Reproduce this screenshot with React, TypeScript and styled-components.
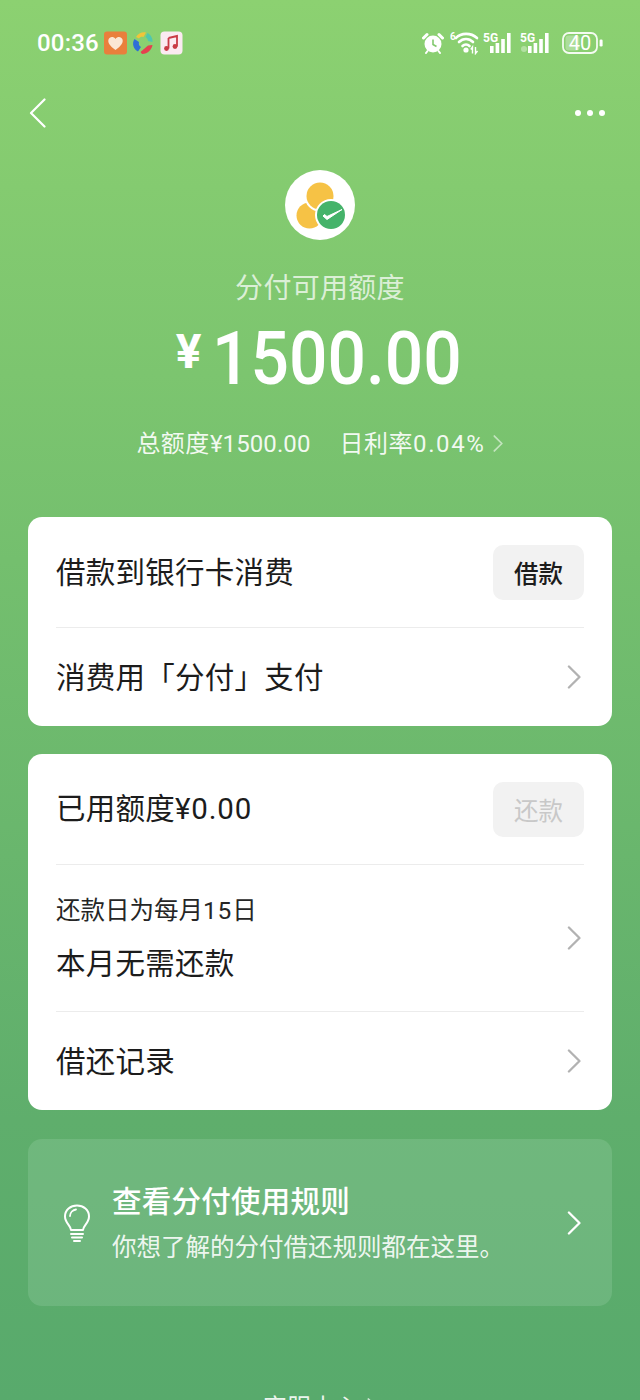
import React from 'react';
import styled, { createGlobalStyle } from 'styled-components';

const GlobalStyle = createGlobalStyle`
  html, body {
    margin: 0;
    padding: 0;
    height: 1400px;
    overflow: hidden;
  }
  body {
    font-family: "Noto Sans CJK SC", "Roboto", sans-serif;
  }
`;

const NUM_FONT = '"Roboto", "Noto Sans CJK SC", sans-serif';

const Page = styled.div`
  width: 640px;
  height: 1400px;
  overflow: hidden;
  box-sizing: border-box;
  padding-top: 28px;
  background: linear-gradient(180deg, #8cd171 0%, #74bf6e 40%, #5fae6c 80%, #58aa6c 100%);
`;

const StatusBar = styled.div`
  height: 30px;
  padding: 0 36px 0 37px;
  display: flex;
  align-items: center;
  justify-content: space-between;
`;

const StatusGroup = styled.div<{ $gap: number }>`
  display: flex;
  align-items: center;
  gap: ${(p) => p.$gap}px;
`;

const Clock = styled.span`
  font-family: ${NUM_FONT};
  font-size: 24px;
  font-weight: 500;
  color: #fff;
  letter-spacing: 0.2px;
  margin-right: 1px;
`;

const AppIcon = styled.svg`
  display: block;
  width: 23px;
  height: 24px;
`;

const StatusIcon = styled.svg`
  display: block;
`;

const Nav = styled.div`
  height: 50px;
  margin-top: 30px;
  padding: 0 30px;
  display: flex;
  align-items: center;
  justify-content: space-between;
`;

const Hero = styled.div`
  margin-top: 32px;
  display: flex;
  flex-direction: column;
  align-items: center;
`;

const LogoBadge = styled.div`
  width: 70px;
  height: 70px;
  border-radius: 50%;
  background: #fff;
  overflow: hidden;
`;

const HeroLabel = styled.div`
  margin-top: 26px;
  font-size: 28px;
  line-height: 40px;
  color: rgba(255, 255, 255, 0.72);
  letter-spacing: 0.3px;
`;

const Amount = styled.div`
  margin-top: 17px;
  height: 72px;
  display: flex;
  align-items: center;
  color: #fff;
  font-family: ${NUM_FONT};
  font-weight: 500;
`;

const Currency = styled.span`
  font-size: 48px;
  line-height: 48px;
  font-weight: 700;
  margin-right: 11px;
  margin-top: -14px;
`;

const AmountValue = styled.span`
  display: inline-block;
  width: 252px;
  font-size: 74px;
  line-height: 72px;
  white-space: nowrap;
  transform: scaleX(0.915);
  transform-origin: left center;
`;

const HeroMeta = styled.div`
  margin-top: 31px;
  height: 34px;
  display: flex;
  align-items: center;
  color: rgba(255, 255, 255, 0.92);
  font-size: 24px;
  line-height: 34px;
`;

const MetaItem = styled.span<{ $spaced?: boolean }>`
  margin-left: ${(p) => (p.$spaced ? 29 : 0)}px;
  letter-spacing: 0.5px;
`;

const MetaNum = styled.span<{ $spacing: number }>`
  font-family: ${NUM_FONT};
  letter-spacing: ${(p) => p.$spacing}px;
`;

const MetaArrow = styled.span`
  margin-left: 8px;
`;

const Stack = styled.div`
  margin-top: 57px;
  padding: 0 28px;
  display: flex;
  flex-direction: column;
  gap: 28px;
`;

const Card = styled.div`
  background: #fff;
  border-radius: 14px;
  padding: 0 28px;
`;

const Row = styled.div<{ $height: number; $divider?: boolean }>`
  height: ${(p) => p.$height}px;
  box-sizing: border-box;
  display: flex;
  align-items: center;
  justify-content: space-between;
  border-bottom: ${(p) => (p.$divider ? '1px solid #ececec' : 'none')};
`;

const RowTitle = styled.div`
  font-size: 29.5px;
  line-height: 40px;
  letter-spacing: 0.25px;
  color: #1c1c1c;
  margin-bottom: 4px;
`;

const RowNum = styled.span`
  font-family: ${NUM_FONT};
  letter-spacing: 0.8px;
`;

const RowColumn = styled.div`
  display: flex;
  flex-direction: column;
  gap: 13px;
`;

const RowCaption = styled.div`
  font-size: 24.5px;
  line-height: 34px;
  color: #262626;
`;

const RowArrow = styled.span`
  margin-right: 3px;
`;

const ActionButton = styled.div<{ $disabled?: boolean }>`
  width: 91px;
  height: 55px;
  border-radius: 10px;
  background: #f2f2f2;
  display: flex;
  align-items: center;
  justify-content: center;
  font-size: 24.5px;
  font-weight: ${(p) => (p.$disabled ? 400 : 500)};
  color: ${(p) => (p.$disabled ? '#c8c8c8' : '#1c1c1c')};
`;

const TipCard = styled.div`
  height: 167px;
  margin-top: 1px;
  box-sizing: border-box;
  border-radius: 14px;
  background: rgba(235, 255, 240, 0.13);
  padding: 0 28px 0 35px;
  display: flex;
  align-items: center;
`;

const TipBody = styled.div`
  flex: 1;
  margin-left: 21px;
  margin-top: -3px;
  display: flex;
  flex-direction: column;
  gap: 8px;
  color: #fff;
`;

const TipTitle = styled.div`
  font-size: 29.5px;
  line-height: 42px;
  letter-spacing: 0.25px;
  font-weight: 500;
`;

const TipText = styled.div`
  font-size: 24.5px;
  line-height: 36px;
  color: rgba(255, 255, 255, 0.9);
`;

const Footer = styled.div`
  margin-top: 83px;
  display: flex;
  align-items: center;
  justify-content: center;
  gap: 8px;
  font-size: 24px;
  line-height: 34px;
  color: rgba(255, 255, 255, 0.9);
`;

const Chevron = ({ color, size = 28, width = 2.4 }: { color: string; size?: number; width?: number }) => (
  <svg width={size * 0.6} height={size} viewBox="0 0 15 25" fill="none" style={{ display: 'block' }}>
    <path d="M2 1.5 L13 12.5 L2 23.5" stroke={color} strokeWidth={width} strokeLinecap="round" strokeLinejoin="round" />
  </svg>
);

export default function App() {
  return (
    <>
      <GlobalStyle />
      <Page>
        <StatusBar>
          <StatusGroup $gap={4}>
            <Clock>00:36</Clock>
            <AppIcon viewBox="0 0 23 24">
              <rect width="23" height="23" y="0.5" rx="3" fill="#e97f3c" />
              <path d="M11.5 19 C6 15 3.5 12 4.5 8.5 C5.5 5.5 9.5 5 11.5 8 C13.5 5 17.5 5.5 18.5 8.5 C19.5 12 17 15 11.5 19 Z" fill="#fbe6d4" />
            </AppIcon>
            <AppIcon viewBox="0 0 23 24">
              <path d="M5 6 C7 2 12 0.5 15 1.5 L12.5 6 C10.5 5.5 9 6 8 7.5 Z" fill="#f0c53a" />
              <path d="M16.5 2 C20 4 22 7.5 21.5 11 L17 10 C17 8.5 16 7 14.5 6 Z" fill="#4fc7ae" />
              <path d="M3.5 8 L8 11 C7.5 13 8 15 10 16 L7 20.5 C2.5 18 0.5 12.5 3.5 8 Z" fill="#2f6fd6" />
              <path d="M21.5 14 C21 18 17 23 11 23 L9.5 21 L17 14.5 Z" fill="#e5404f" />
            </AppIcon>
            <AppIcon viewBox="0 0 23 24" style={{ marginLeft: 2 }}>
              <rect x="0.5" y="0.5" width="22" height="23" rx="4" fill="#fbeaf1" />
              <path d="M8.5 7 L17 5 L17 15.5 M8.5 7 L8.5 17.5" stroke="#c93a45" strokeWidth="1.8" fill="none" />
              <circle cx="6.5" cy="17.5" r="2.4" fill="#c93a45" />
              <circle cx="15" cy="15.5" r="2.4" fill="#c93a45" />
            </AppIcon>
          </StatusGroup>
          <StatusGroup $gap={4}>
            <StatusIcon width="22" height="22" viewBox="0 0 22 22">
              <circle cx="11" cy="12" r="8.5" fill="#fff" />
              <path d="M11 7.5 V12.5 L14.5 14.5" stroke="#82c96f" strokeWidth="1.6" fill="none" />
              <path d="M1.5 6 L5 2.5 M20.5 6 L17 2.5" stroke="#fff" strokeWidth="3" strokeLinecap="round" />
              <path d="M5.5 19 L4 21 M16.5 19 L18 21" stroke="#fff" strokeWidth="2" strokeLinecap="round" />
            </StatusIcon>
            <StatusIcon width="29" height="24" viewBox="0 0 29 24" style={{ marginLeft: 2 }}>
              <text x="0" y="9" fontSize="10" fontWeight="700" fill="#fff" fontFamily="Roboto, sans-serif">6</text>
              <path d="M6 7 C11 1.5 21 1.5 27 7 M9 11 C13 7 19 7 23 11 M12.5 15 C14.5 13 17.5 13 19.5 15" stroke="#fff" strokeWidth="2.6" fill="none" strokeLinecap="round" />
              <circle cx="16" cy="19" r="2.6" fill="#fff" />
              <path d="M22.5 22.5 V16 L20.8 18.5 M25.5 16 V22.5 L27.5 20" stroke="#fff" strokeWidth="1.4" fill="none" />
            </StatusIcon>
            <StatusIcon width="32" height="24" viewBox="0 0 32 24">
              <text x="0" y="11" fontSize="12" fontWeight="700" fill="#fff" fontFamily="Roboto, sans-serif">5G</text>
              <path d="M7 15h3.6v7H7z M12.6 12h3.6v10h-3.6z M18.2 8h3.6v14h-3.6z M24 2h3.6v20H24z" fill="#fff" />
            </StatusIcon>
            <StatusIcon width="33" height="24" viewBox="0 0 33 24" style={{ marginLeft: 1 }}>
              <text x="0" y="11" fontSize="12" fontWeight="700" fill="#fff" fontFamily="Roboto, sans-serif">5G</text>
              <path d="M8 15h3.6v7H8z M13.6 12h3.6v10h-3.6z M19.2 8h3.6v14h-3.6z M25 2h3.6v20H25z" fill="#fff" />
              <circle cx="4" cy="18" r="3" fill="rgba(255,255,255,0.35)" />
            </StatusIcon>
            <StatusIcon width="42" height="22" viewBox="0 0 42 22" style={{ marginLeft: 5 }}>
              <rect x="1" y="1" width="34" height="20" rx="6" fill="none" stroke="#fff" strokeWidth="1.8" strokeOpacity="0.9" />
              <rect x="3.5" y="3.5" width="14" height="15" rx="3" fill="rgba(255,255,255,0.3)" />
              <text x="18" y="18" textAnchor="middle" fontSize="20" fill="#fff" fontFamily="Roboto, sans-serif">40</text>
              <rect x="37.6" y="7.5" width="3" height="7" rx="1.2" fill="#fff" />
            </StatusIcon>
          </StatusGroup>
        </StatusBar>

        <Nav>
          <svg width="17" height="30" viewBox="0 0 17 30" fill="none" style={{ display: 'block', marginLeft: -1 }}>
            <path d="M15.5 1.5 L2 15 L15.5 28.5" stroke="#fff" strokeWidth="2.2" strokeLinecap="round" strokeLinejoin="round" />
          </svg>
          <svg width="32" height="8" viewBox="0 0 32 8" style={{ display: 'block', marginRight: 4 }}>
            <circle cx="4" cy="4" r="3" fill="#fff" />
            <circle cx="16" cy="4" r="3" fill="#fff" />
            <circle cx="28" cy="4" r="3" fill="#fff" />
          </svg>
        </Nav>

        <Hero>
          <LogoBadge>
            <svg width="70" height="70" viewBox="0 0 70 70" style={{ display: 'block' }}>
              <circle cx="24.5" cy="45.5" r="13" fill="#f6c245" />
              <circle cx="35" cy="26" r="15.5" fill="#fff" />
              <circle cx="35" cy="26" r="13.5" fill="#f6c245" />
              <circle cx="46" cy="45" r="16" fill="#fff" />
              <circle cx="46" cy="45" r="14" fill="#45b36a" />
              <path d="M38 46 L42 49.5 L57 39.5 L42 46.5 L39.5 44.5 Z" fill="#fff" stroke="#fff" strokeWidth="1" strokeLinejoin="round" />
            </svg>
          </LogoBadge>
          <HeroLabel>分付可用额度</HeroLabel>
          <Amount>
            <Currency>¥</Currency>
            <AmountValue>1500.00</AmountValue>
          </Amount>
          <HeroMeta>
            <MetaItem>总额度<MetaNum $spacing={0.1}>¥1500.00</MetaNum></MetaItem>
            <MetaItem $spaced>日利率<MetaNum $spacing={1.6}>0.04%</MetaNum></MetaItem>
            <MetaArrow>
              <Chevron color="rgba(255,255,255,0.55)" size={17} width={2.6} />
            </MetaArrow>
          </HeroMeta>
        </Hero>

        <Stack>
          <Card>
            <Row $height={111} $divider>
              <RowTitle>借款到银行卡消费</RowTitle>
              <ActionButton>借款</ActionButton>
            </Row>
            <Row $height={98}>
              <RowTitle>消费用「分付」支付</RowTitle>
              <RowArrow><Chevron color="#b2b2b2" size={24} /></RowArrow>
            </Row>
          </Card>

          <Card>
            <Row $height={111} $divider>
              <RowTitle>已用额度<RowNum>¥0.00</RowNum></RowTitle>
              <ActionButton $disabled>还款</ActionButton>
            </Row>
            <Row $height={147} $divider>
              <RowColumn>
                <RowCaption>还款日为每月<RowNum>15</RowNum>日</RowCaption>
                <RowTitle>本月无需还款</RowTitle>
              </RowColumn>
              <RowArrow><Chevron color="#b2b2b2" size={24} /></RowArrow>
            </Row>
            <Row $height={98}>
              <RowTitle>借还记录</RowTitle>
              <RowArrow><Chevron color="#b2b2b2" size={24} /></RowArrow>
            </Row>
          </Card>

          <TipCard>
            <svg width="28" height="38" viewBox="0 0 28 38" fill="none" style={{ display: 'block' }}>
              <path d="M8 26 C8 22 2 19 2 12.5 C2 6 7.5 1.5 14 1.5 C20.5 1.5 26 6 26 12.5 C26 19 20 22 20 26 Z" stroke="#fff" strokeWidth="2" strokeLinejoin="round" />
              <path d="M7 12 C7 8.5 10 6 13 5.5" stroke="#fff" strokeWidth="1.8" strokeLinecap="round" />
              <path d="M8 30 H20 M9 33.5 H19 M11 37 H17" stroke="#fff" strokeWidth="2" strokeLinecap="round" />
            </svg>
            <TipBody>
              <TipTitle>查看分付使用规则</TipTitle>
              <TipText>你想了解的分付借还规则都在这里。</TipText>
            </TipBody>
            <RowArrow><Chevron color="#fff" size={24} /></RowArrow>
          </TipCard>
        </Stack>

        <Footer>
          客服中心
          <Chevron color="rgba(255,255,255,0.7)" size={17} width={2.6} />
        </Footer>
      </Page>
    </>
  );
}
